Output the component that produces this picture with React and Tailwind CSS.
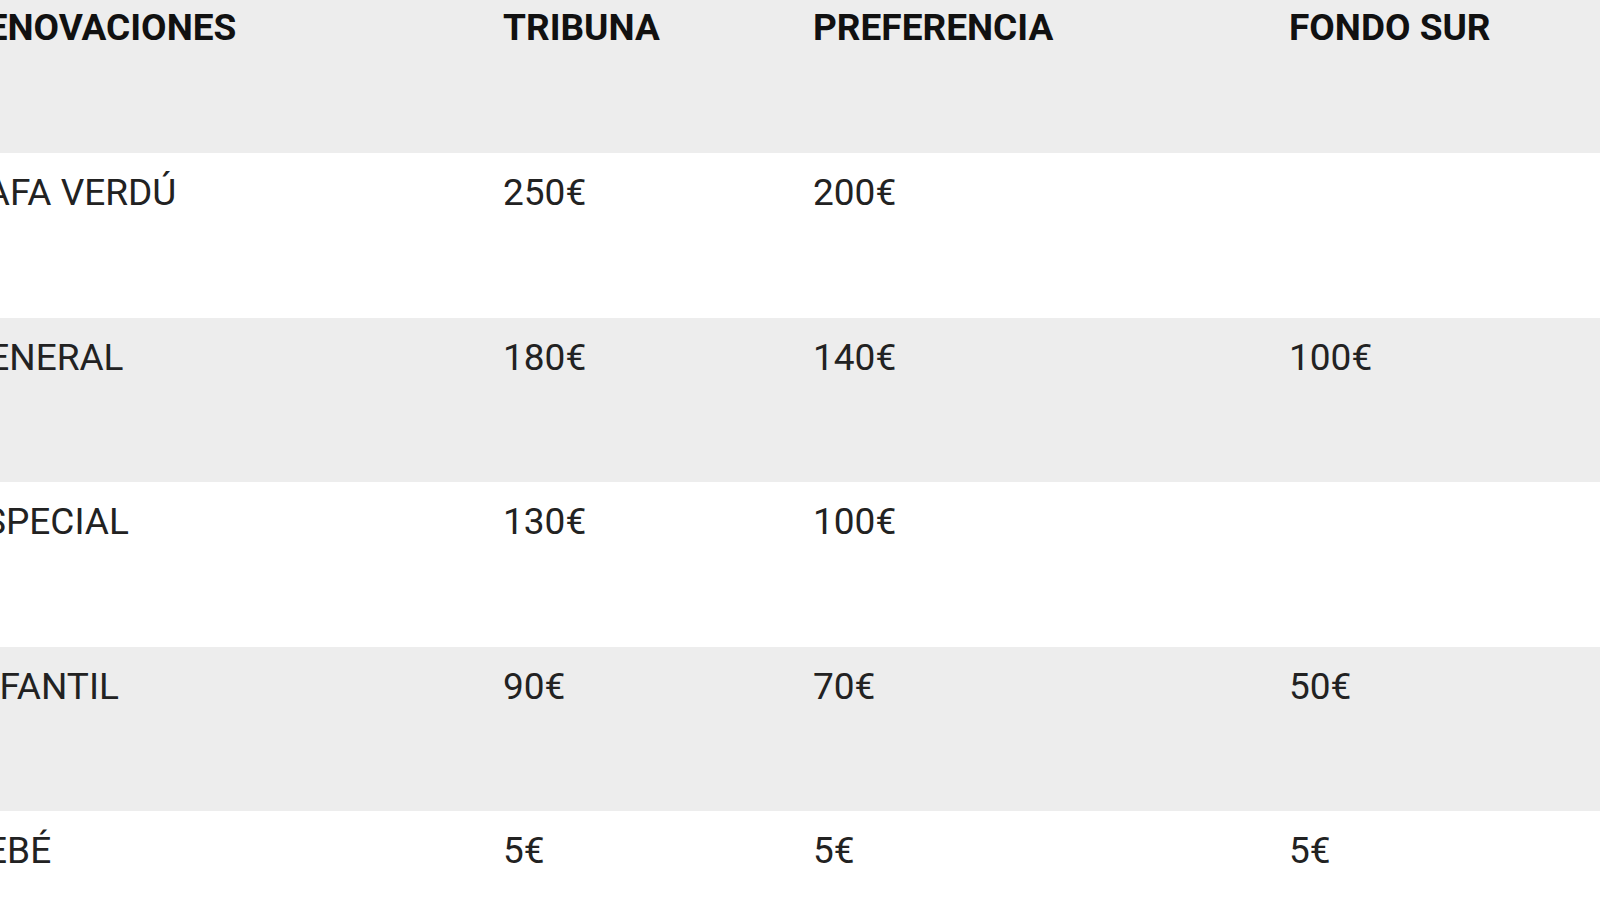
import React from "react";

const rows = [
  ["RAFA VERDÚ", "250€", "200€", ""],
  ["GENERAL", "180€", "140€", "100€"],
  ["ESPECIAL", "130€", "100€", ""],
  ["INFANTIL", "90€", "70€", "50€"],
  ["BEBÉ", "5€", "5€", "5€"],
];

export default function App() {
  return (
    <div className="w-[1600px] h-[900px] overflow-hidden bg-white" style={{ fontFamily: "Roboto, 'Liberation Sans', sans-serif" }}>
      <div className="ml-[-37px] w-[1637px]">
        <div className="grid grid-cols-[540px_310px_476px_1fr] h-[153px] bg-[#ededed] text-[37px] leading-[44px] font-bold text-[#111]">
          <div className="pt-[6px]">RENOVACIONES</div>
          <div className="pt-[6px]">TRIBUNA</div>
          <div className="pt-[6px]">PREFERENCIA</div>
          <div className="pt-[6px]">FONDO SUR</div>
        </div>
        {rows.map((r, i) => (
          <div
            key={i}
            className={
              "grid grid-cols-[540px_310px_476px_1fr] h-[164.5px] text-[37px] leading-[44px] text-[#222] " +
              (i % 2 === 1 ? "bg-[#ededed]" : "bg-white")
            }
          >
            {r.map((c, j) => (
              <div key={j} className="pt-[18px]">{c}</div>
            ))}
          </div>
        ))}
      </div>
    </div>
  );
}
